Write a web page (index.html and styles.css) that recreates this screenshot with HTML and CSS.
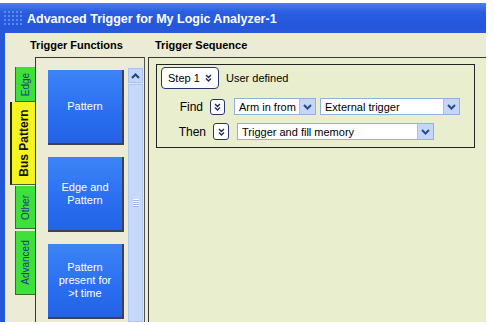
FILE: index.html
```html
<!DOCTYPE html>
<html lang="en">
<head>
    <meta charset="UTF-8">
    <title>Advanced Trigger</title>
    <link rel="stylesheet" href="styles.css">
</head>
<body>
    <div class="window">
        <div class="titlebar">
            <span class="sparkle"></span>
            <span class="title">Advanced Trigger for My Logic Analyzer-1</span>
        </div>
        <div class="client">
            <div class="headers">
                <div class="head-functions">Trigger Functions</div>
                <div class="head-sequence">Trigger Sequence</div>
            </div>
            <div class="main">
                <div class="tabs">
                    <div class="tab tab-edge"><span>Edge</span></div>
                    <div class="tab tab-bus active"><span>Bus Pattern</span></div>
                    <div class="tab tab-other"><span>Other</span></div>
                    <div class="tab tab-advanced"><span>Advanced</span></div>
                </div>
                <div class="functions">
                    <div class="func-list">
                        <div class="func-btn">Pattern</div>
                        <div class="func-btn">Edge and<br>Pattern</div>
                        <div class="func-btn">Pattern<br>present for<br>&gt;t time</div>
                    </div>
                    <div class="scrollbar">
                        <div class="scroll-up">
                            <svg width="9" height="6" viewBox="0 0 9 6"><path d="M1 5 L4.5 1.5 L8 5" fill="none" stroke="#25407a" stroke-width="2"/></svg>
                        </div>
                        <div class="scroll-thumb">
                            <div class="grip"></div>
                        </div>
                    </div>
                </div>
                <div class="sequence">
                    <div class="step-box">
                        <div class="step-row">
                            <div class="step-select">
                                <span>Step 1</span>
                                <svg width="7" height="8" viewBox="0 0 7 8"><path d="M1 1 L3.5 3.5 L6 1 M1 4.5 L3.5 7 L6 4.5" fill="none" stroke="#1c2d5a" stroke-width="1.4"/></svg>
                            </div>
                            <span class="step-label">User defined</span>
                        </div>
                        <div class="cond-row">
                            <span class="cond-label">Find</span>
                            <div class="dbl-btn">
                                <svg width="7" height="8" viewBox="0 0 7 8"><path d="M1 1 L3.5 3.5 L6 1 M1 4.5 L3.5 7 L6 4.5" fill="none" stroke="#1c2d5a" stroke-width="1.4"/></svg>
                            </div>
                            <div class="combo combo-arm">
                                <span>Arm in from</span>
                                <div class="drop"><svg width="9" height="6" viewBox="0 0 9 6"><path d="M1 1 L4.5 4.5 L8 1" fill="none" stroke="#2b4a8a" stroke-width="2"/></svg></div>
                            </div>
                            <div class="combo combo-ext">
                                <span>External trigger</span>
                                <div class="drop"><svg width="9" height="6" viewBox="0 0 9 6"><path d="M1 1 L4.5 4.5 L8 1" fill="none" stroke="#2b4a8a" stroke-width="2"/></svg></div>
                            </div>
                        </div>
                        <div class="cond-row then-row">
                            <span class="cond-label">Then</span>
                            <div class="dbl-btn">
                                <svg width="7" height="8" viewBox="0 0 7 8"><path d="M1 1 L3.5 3.5 L6 1 M1 4.5 L3.5 7 L6 4.5" fill="none" stroke="#1c2d5a" stroke-width="1.4"/></svg>
                            </div>
                            <div class="combo combo-then">
                                <span>Trigger and fill memory</span>
                                <div class="drop"><svg width="9" height="6" viewBox="0 0 9 6"><path d="M1 1 L4.5 4.5 L8 1" fill="none" stroke="#2b4a8a" stroke-width="2"/></svg></div>
                            </div>
                        </div>
                    </div>
                </div>
            </div>
        </div>
    </div>
</body>
</html>
```

FILE: styles.css
```css
body {
    margin: 0;
    padding: 0;
    background: #ffffff;
    font-family: "Liberation Sans", Arial, sans-serif;
    font-size: 11px;
}

.window {
    margin-top: 3px;
    width: 486px;
    height: 319px;
    display: flex;
    flex-direction: column;
}

.titlebar {
    height: 30px;
    display: flex;
    align-items: center;
    background: linear-gradient(#4a80f0, #2a5ee0 30%, #2456dc 80%, #2a5ad4);
    color: #ffffff;
}

/* faint dotted logo at the left of the caption */
.sparkle {
    width: 20px;
    height: 16px;
    margin: 0 4px 0 3px;
    background: radial-gradient(circle, #6b93ee 0 1px, transparent 1.5px) 0 0 / 4px 4px;
    opacity: 0.8;
}

.title {
    font-weight: bold;
    font-size: 12.5px;
    padding-top: 1px;
}

.client {
    flex: 1;
    display: flex;
    flex-direction: column;
    border-left: 5px solid #2556d8;
    background: #ecebd6;
}

.headers {
    height: 24px;
    display: flex;
    align-items: center;
    font-weight: bold;
    font-size: 11px;
}

.head-functions {
    width: 125px;
    padding-left: 25px;
    box-sizing: border-box;
}

.head-sequence {
    padding-left: 25px;
}

.main {
    flex: 1;
    display: flex;
}

.tabs {
    width: 30px;
    padding-top: 10px;
    display: flex;
    flex-direction: column;
    align-items: flex-end;
}

.tab {
    width: 19px;
    display: flex;
    align-items: center;
    justify-content: center;
    background: #3ee03a;
    border-left: 1px solid #3a6a30;
    border-bottom: 1px solid #3a6a30;
    color: #1b3a8a;
    font-size: 10px;
}

.tab span {
    transform: rotate(-90deg);
    white-space: nowrap;
}

.tab-edge {
    height: 34px;
}

.tab-bus {
    width: 23px;
    height: 82px;
    background: #f4f420;
    color: #111111;
    font-weight: bold;
    font-size: 12px;
    border-left: 2px solid #222222;
}

.tab-other {
    height: 42px;
    margin-top: 1px;
}

.tab-advanced {
    height: 63px;
    margin-top: 2px;
}

.functions {
    width: 108px;
    display: flex;
    border-top: 1px solid #3a3a30;
    border-left: 1px solid #3a3a30;
    border-right: 1px solid #55554a;
}

.func-list {
    width: 91px;
    padding: 12px 0 0 12px;
    box-sizing: border-box;
    display: flex;
    flex-direction: column;
    gap: 12px;
}

.func-btn {
    width: 76px;
    height: 75px;
    box-sizing: border-box;
    display: flex;
    align-items: center;
    justify-content: center;
    text-align: center;
    color: #ffffff;
    font-size: 11px;
    line-height: 13px;
    background: linear-gradient(#3c84f6, #2a6ef0 60%, #2462e6);
    border-right: 2px solid #404050;
    border-bottom: 2px solid #404050;
}

.scrollbar {
    width: 15px;
    margin: 10px 0 0 1px;
    display: flex;
    flex-direction: column;
    background: #dbe6fb;
}

.scroll-up {
    height: 15px;
    display: flex;
    align-items: center;
    justify-content: center;
    background: #c3d6f8;
    border: 1px solid #a9c2ee;
    box-sizing: border-box;
}

.scroll-thumb {
    flex: 1;
    margin-top: 1px;
    background: #c6d9fa;
    border: 1px solid #b0c8f0;
    display: flex;
    align-items: center;
    justify-content: center;
}

.grip {
    width: 6px;
    height: 8px;
    background: repeating-linear-gradient(#ffffff 0 1px, #9db6e4 1px 2px);
}

.sequence {
    flex: 1;
    margin-left: 3px;
    padding: 6px 11px 0 7px;
    background: #e9eecf;
    border-top: 1px solid #3a3a30;
    border-left: 1px solid #3a3a30;
    box-shadow: -3px 0 0 #ecebd6, -4px 0 0 #55554a;
}

.step-box {
    height: 84px;
    box-sizing: border-box;
    border: 1px solid #222222;
    padding: 2px 0 0 4px;
}

.step-row {
    display: flex;
    align-items: center;
    gap: 7px;
}

.step-select {
    width: 58px;
    height: 22px;
    box-sizing: border-box;
    display: flex;
    align-items: center;
    justify-content: space-between;
    padding: 0 6px 0 6px;
    background: #ffffff;
    border: 1px solid #26386a;
    border-radius: 4px;
}

.cond-row {
    display: flex;
    align-items: center;
    margin-top: 9px;
    height: 17px;
}

.then-row {
    margin-top: 8px;
}

.cond-label {
    width: 42px;
    text-align: right;
    font-size: 12px;
}

.dbl-btn {
    width: 15px;
    height: 16px;
    box-sizing: border-box;
    margin-left: 7px;
    display: flex;
    align-items: center;
    justify-content: center;
    background: #ffffff;
    border: 1px solid #26386a;
    border-radius: 3px;
}

.then-row .cond-label {
    width: 45px;
}

.then-row .dbl-btn {
    height: 17px;
    width: 16px;
}

.combo {
    height: 17px;
    box-sizing: border-box;
    display: flex;
    align-items: center;
    justify-content: space-between;
    padding-left: 4px;
    background: #ffffff;
    border: 1px solid #8fb0e0;
}

.combo-arm {
    width: 82px;
    margin-left: 9px;
}

.combo-ext {
    width: 140px;
    margin-left: 4px;
}

.combo-then {
    width: 197px;
    margin-left: 8px;
}

.drop {
    width: 15px;
    height: 15px;
    display: flex;
    align-items: center;
    justify-content: center;
    background: #c4d6fb;
    border-left: 1px solid #a8c0ec;
}
```
